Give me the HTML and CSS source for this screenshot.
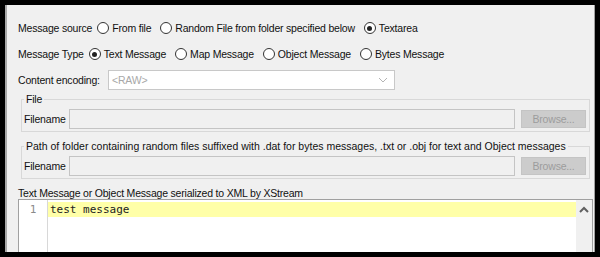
FILE: index.html
```html
<!DOCTYPE html>
<html lang="en">
  <head>
    <meta charset="UTF-8" />
    <title>Message source</title>
    <link rel="stylesheet" href="styles.css">
  </head>
  <body>
    <div class="window">
      <div class="row first">
        <span class="label">Message source</span>
        <label class="radio"><span class="dot"></span>From file</label>
        <label class="radio"><span class="dot"></span>Random File from folder specified below</label>
        <label class="radio"><span class="dot on"></span>Textarea</label>
      </div>

      <div class="row">
        <span class="label">Message Type</span>
        <label class="radio"><span class="dot on"></span>Text Message</label>
        <label class="radio"><span class="dot"></span>Map Message</label>
        <label class="radio"><span class="dot"></span>Object Message</label>
        <label class="radio"><span class="dot"></span>Bytes Message</label>
      </div>

      <div class="row encoding">
        <span class="label">Content encoding:</span>
        <div class="combo">
          <span>&lt;RAW&gt;</span>
          <svg width="10" height="6" viewBox="0 0 10 6"><path d="M1 1 L5 5 L9 1" fill="none" stroke="#b4b4b4" stroke-width="1"/></svg>
        </div>
      </div>

      <fieldset class="group one">
        <legend>File</legend>
        <div class="file-row">
          <span>Filename</span>
          <div class="field"></div>
          <button disabled>Browse...</button>
        </div>
      </fieldset>

      <fieldset class="group two">
        <legend>Path of folder containing random files suffixed with .dat for bytes messages, .txt or .obj for text and Object messages</legend>
        <div class="file-row">
          <span>Filename</span>
          <div class="field"></div>
          <button disabled>Browse...</button>
        </div>
      </fieldset>

      <div class="editor-title">Text Message or Object Message serialized to XML by XStream</div>
      <div class="editor">
        <div class="gutter"><span>1</span></div>
        <div class="code">
          <div class="line current">test message</div>
        </div>
        <div class="scrollbar">
          <svg width="10" height="7" viewBox="0 0 10 7"><path d="M1 6 L5 2 L9 6" fill="none" stroke="#606060" stroke-width="2"/></svg>
        </div>
      </div>
    </div>
  </body>
</html>
```

FILE: styles.css
```css
body {
  margin: 0;
  background: #000;
  font-family: "Liberation Sans", Arial, sans-serif;
  font-size: 10.5px;
  letter-spacing: -0.2px;
  color: #111;
  overflow: hidden;
}

.window {
  margin: 5px 5px 0 5px;
  height: 247px;
  background: #f0f0f0;
  border-left: 2px solid #a8a8a8;
  border-right: 1px solid #a0a0a0;
  padding: 13px 1px 0 11px;
  box-sizing: border-box;
  overflow: hidden;
}

.row {
  display: flex;
  align-items: center;
  height: 20px;
  margin-top: 6px;
  white-space: nowrap;
}

.row.first {
  margin-top: 0;
}

.label {
  margin-right: 5px;
}

.radio {
  display: flex;
  align-items: center;
  margin-right: 9px;
}

.dot {
  width: 12px;
  height: 12px;
  border: 1px solid #333;
  border-radius: 50%;
  background: #fff;
  margin-right: 3px;
  box-sizing: border-box;
  position: relative;
}

.dot.on::after {
  content: "";
  position: absolute;
  left: 2.5px;
  top: 2.5px;
  width: 5px;
  height: 5px;
  border-radius: 50%;
  background: #222;
}

.encoding .label {
  width: 85px;
  margin-right: 5px;
}

.combo {
  width: 287px;
  height: 20px;
  box-sizing: border-box;
  background: #fff;
  border: 1px solid #c8c8c8;
  display: flex;
  align-items: center;
  justify-content: space-between;
  padding: 0 6px 0 3px;
  color: #a8a8a8;
}

.group {
  margin: 3px 3px 0 3px;
  padding: 3px 2px 2px 2px;
  border: 1px solid #d8d8d8;
  min-width: 0;
}

.group.two {
  margin-top: 8px;
}

.group legend {
  padding: 0 2px;
  line-height: 13px;
  white-space: nowrap;
}

.group.two legend {
  letter-spacing: 0;
}

.file-row {
  display: flex;
  align-items: center;
  height: 20px;
}

.file-row span {
  width: 45px;
}

.field {
  flex: 1;
  height: 20px;
  box-sizing: border-box;
  border: 1px solid #c4c4c4;
  background: #f0f0f0;
}

button {
  margin-left: 6px;
  margin-right: 1px;
  width: 65px;
  height: 18px;
  border: 1px solid #c4c4c4;
  background: #cccccc;
  color: #9c9c9c;
  font-family: inherit;
  font-size: 10.5px;
  letter-spacing: -0.2px;
  padding: 0;
}

.editor-title {
  margin-top: 8px;
  line-height: 12px;
  white-space: nowrap;
}

.editor {
  display: flex;
  height: 60px;
  border: 1px solid #a0a0a0;
  background: #fff;
}

.gutter {
  width: 28px;
  border-right: 1px solid #d8d8d8;
  color: #8a8a8a;
  font-family: "DejaVu Sans Mono", monospace;
  font-size: 11px;
  letter-spacing: 0;
  padding-top: 2px;
  text-align: center;
  line-height: 15px;
}

.code {
  flex: 1;
  padding-top: 2px;
}

.line {
  height: 15px;
  line-height: 15px;
  padding-left: 2px;
  font-family: "DejaVu Sans Mono", monospace;
  font-size: 11px;
  letter-spacing: 0;
  color: #222;
}

.line.current {
  background: #ffffa8;
}

.scrollbar {
  width: 16px;
  background: #f0f0f0;
  display: flex;
  justify-content: center;
  padding-top: 6px;
  box-sizing: border-box;
}
```
